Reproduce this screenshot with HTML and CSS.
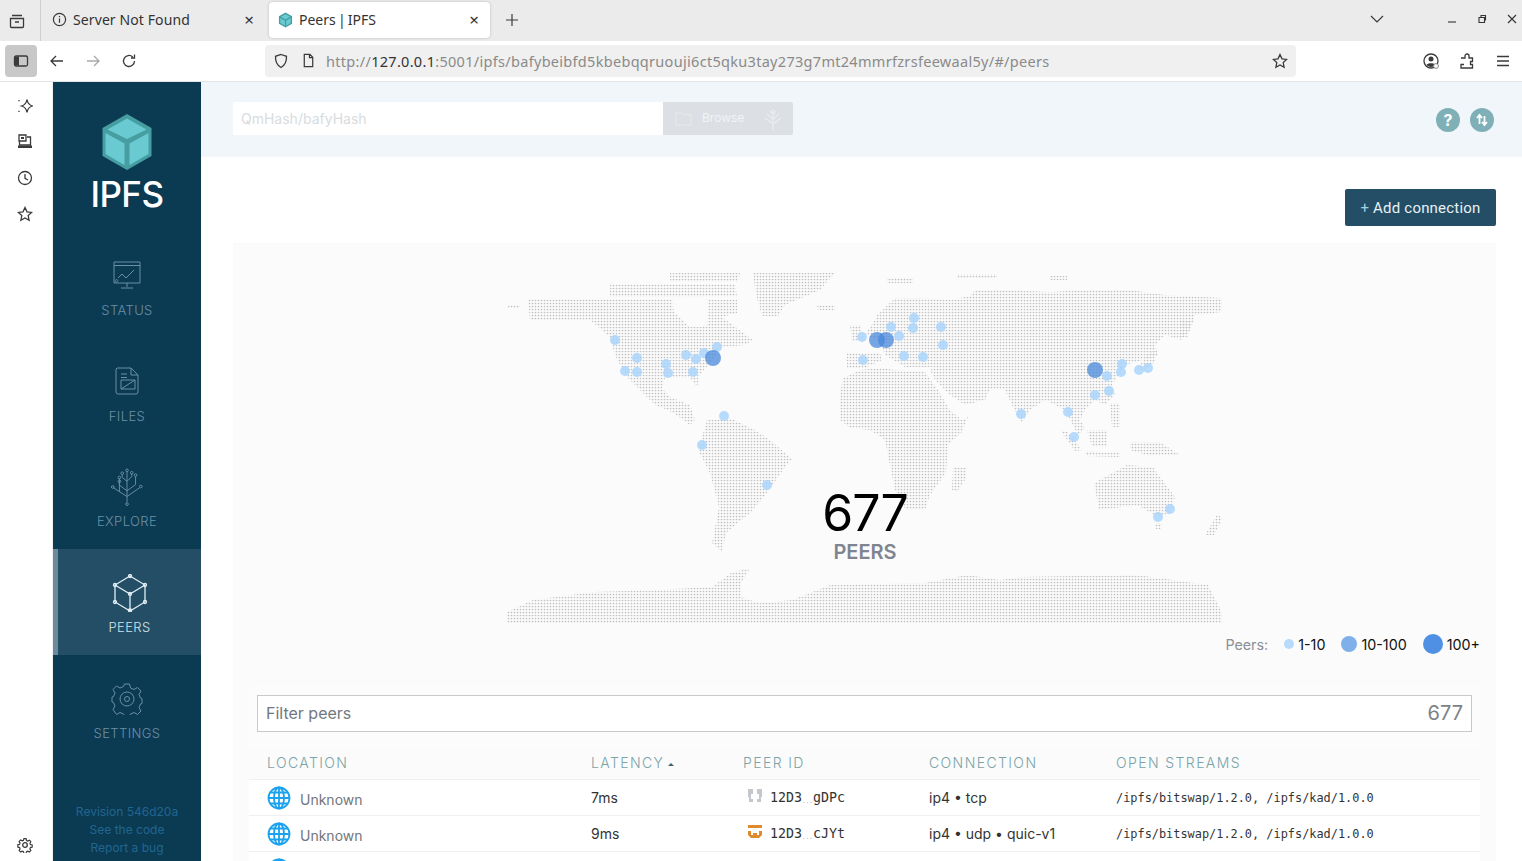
FILE: index.html
```html
<!DOCTYPE html>
<html lang="en">
<head>
<meta charset="utf-8">
<title>Peers | IPFS</title>
<link rel="stylesheet" href="styles.css">
</head>
<body>
<div class="tabbar">
  <div class="tabbar-lead">
    <svg class="ic16" viewBox="0 0 16 16"><path d="M3 2.500h10M1.500 5.500h13v8a1 1 0 0 1-1 1h-11a1 1 0 0 1-1-1zM6 9h4"/></svg>
  </div>
  <div class="tab">
    <svg class="ic15 tab-icon" viewBox="0 0 16 16"><circle cx="8" cy="8" r="6.500"/><path d="M8 7v4.500M8 4.200v1.400"/></svg>
    <span class="tab-title">Server Not Found</span>
    <span class="tab-close">×</span>
  </div>
  <div class="tab tab-active">
    <svg class="tab-cube" viewBox="0 0 16 16"><path fill="#469ea2" d="M8 0l7 4v8l-7 4-7-4V4z"/><path fill="#6acad1" d="M8 1.800l5 2.800-5 2.800-5-2.800zM2.400 5.800l5 2.900v5.400l-5-2.900zM13.600 5.800l-5 2.900v5.400l5-2.900z"/></svg>
    <span class="tab-title tab-title-tight">Peers | IPFS</span>
    <span class="tab-close">×</span>
  </div>
  <svg class="ic14 newtab" viewBox="0 0 14 14"><path d="M7 1v12M1 7h12"/></svg>
  <div class="grow"></div>
  <svg class="ic14 tab-list" viewBox="0 0 14 14"><path d="M1 4l6 6 6-6"/></svg>
  <div class="winctl">
    <svg class="ic10" viewBox="0 0 10 10"><path d="M1 8h8"/></svg>
    <svg class="ic10" viewBox="0 0 10 10"><path d="M2 3.500h5.500v5H2zM4 3.500V1.500h4.500v4.500H7.500"/></svg>
    <svg class="ic10" viewBox="0 0 10 10"><path d="M1 1l8 8M9 1l-8 8"/></svg>
  </div>
</div>

<div class="toolbar">
  <div class="sidebar-btn"><svg class="ic16" viewBox="0 0 16 16"><rect x="1.500" y="3" width="13" height="10" rx="1.500"/><path class="solid" d="M2 3.500h4v9H2z"/></svg></div>
  <svg class="ic16 tool" viewBox="0 0 16 16"><path d="M14 8H2M7 3L2 8l5 5"/></svg>
  <svg class="ic16 tool tool-off" viewBox="0 0 16 16"><path d="M2 8h12M9 3l5 5-5 5"/></svg>
  <svg class="ic16 tool" viewBox="0 0 16 16"><path d="M13.500 8a5.500 5.500 0 1 1-1.800-4.100M13.500 1.500v3.500H10"/></svg>
  <div class="urlbar">
    <svg class="ic16 url-shield" viewBox="0 0 16 16"><path d="M8 1.500l5.500 1.800c.2 5-1.500 9-5.500 11.200-4-2.200-5.700-6.200-5.500-11.200z"/></svg>
    <svg class="ic15 url-doc" viewBox="0 0 16 16"><path d="M3.500 1.500h6l3 3v10h-9zM9 1.500v3.500h3.500"/></svg>
    <span class="url"><span class="url-dim">http://</span>127.0.0.1<span class="url-dim">:5001/ipfs/bafybeibfd5kbebqqruouji6ct5qku3tay273g7mt24mmrfzrsfeewaal5y/#/peers</span></span>
    <svg class="ic16 url-star" viewBox="0 0 16 16"><path d="M8 1.500l2 4.300 4.700.6-3.500 3.200.9 4.700L8 12l-4.100 2.300.9-4.700L1.300 6.400 6 5.800z"/></svg>
  </div>
  <svg class="ic16 tool-r" viewBox="0 0 16 16"><circle cx="8" cy="8" r="7"/><circle class="solid" cx="8" cy="6" r="2.500"/><path class="solid" d="M3.500 12c1-2.500 8-2.500 9 0-2 2.500-7 2.500-9 0z"/><circle class="badge" cx="13" cy="13" r="2.400"/></svg>
  <svg class="ic16 tool-r" viewBox="0 0 16 16"><path d="M2 5h4V3a2 2 0 0 1 4 0v2h3.500v3.500h-2v3h2V15H2v-3.500h3"/></svg>
  <svg class="ic16 tool-r" viewBox="0 0 16 16"><path d="M2 3.500h12M2 8h12M2 12.500h12"/></svg>
</div>

<div class="content">
  <aside class="fxbar">
    <svg class="ic16 fx" viewBox="0 0 16 16"><path d="M10 1.500c.6 4 2 5.500 5.500 6.500-3.500 1-4.900 2.500-5.500 6.500-.6-4-2-5.500-5.500-6.500 3.500-1 4.900-2.500 5.500-6.500z"/><path d="M2 2v1.200M2 12.800V14"/></svg>
    <svg class="ic16 fx" viewBox="0 0 16 16"><path d="M2 1h7v6H2zM10 3h3.500v8H2.500V7"/><path class="solid" d="M1 11.500h14v2.500H1zM4 3h3v2H4z"/></svg>
    <svg class="ic16 fx" viewBox="0 0 16 16"><circle cx="8" cy="8" r="6.500"/><path d="M8 4v4.300l3 1.700"/></svg>
    <svg class="ic16 fx" viewBox="0 0 16 16"><path d="M8 1.500l2 4.300 4.700.6-3.500 3.200.9 4.700L8 12l-4.100 2.300.9-4.700L1.300 6.400 6 5.800z"/></svg>
    <div class="grow"></div>
    <svg class="ic16 fx fx-last" viewBox="0 0 16 16"><circle cx="8" cy="8" r="2.300"/><path d="M6.800 1h2.400l.5 2 1.400.6 1.800-1 1.600 1.700-1 1.800.5 1.400 2 .5v2.400l-2 .5-.5 1.400 1 1.800-1.600 1.700-1.800-1-1.400.6-.5 2H6.800l-.5-2-1.400-.6-1.800 1-1.600-1.700 1-1.800-.5-1.400-2-.5V7.800l2-.5.5-1.400-1-1.800 1.600-1.700 1.800 1 1.400-.6z" transform="translate(.8 .8) scale(.9)"/></svg>
  </aside>

  <nav class="nav">
    <div class="brand">
      <svg class="brand-cube" viewBox="0 0 50 56"><path fill="#469ea2" d="M25 0l24.500 14v28L25 56 .5 42V14z"/><path fill="#6acad1" d="M25 4.500l19.500 11L25 25 5.500 15.500zM3.500 19l19 10.500V51L3.500 40zM46.500 19l-19 10.500V51l19-11z"/></svg>
      <div class="brand-name">IPFS</div>
    </div>
    <a class="nav-item">
      <svg class="nav-icon" viewBox="0 0 32 32"><path d="M3 3h26v21H3zM3 6.500h26M16 24v4M10 29h12M5.500 20.500a1.200 1.200 0 1 0 .1 0M7 19l4-4 4 4 6-6 2-2"/></svg>
      <span class="nav-label">STATUS</span>
    </a>
    <a class="nav-item">
      <svg class="nav-icon" viewBox="0 0 32 32"><path d="M6 3h14l7 7v17a2 2 0 0 1-2 2H7a2 2 0 0 1-2-2V4zM20 3v7h7M10 9h6M10 12.500h6M10 15h14v9H10zM10 24l14-9"/></svg>
      <span class="nav-label">FILES</span>
    </a>
    <a class="nav-item">
      <svg class="nav-icon nav-icon-tall" viewBox="0 0 36 40"><path d="M18 36V4M18 30L4 21M18 30l13-9M18 24l-8-6V11M18 24l9-6.500V9M18 14l-5-4V7M18 14l5-5V6M10 25V15"/><circle cx="18" cy="2.500" r="1.400"/><circle cx="18" cy="38" r="1.400"/><circle cx="3" cy="20" r="1.400"/><circle cx="32.500" cy="19.500" r="1.400"/><circle cx="10" cy="10" r="1.400"/><circle cx="27" cy="7.500" r="1.400"/><circle cx="13" cy="5.500" r="1.400"/><circle cx="23" cy="5" r="1.400"/><circle cx="10" cy="14" r="1.400"/></svg>
      <span class="nav-label nav-label-low">EXPLORE</span>
    </a>
    <a class="nav-item nav-active">
      <svg class="nav-icon nav-icon-tall" viewBox="0 0 36 38"><path d="M18 2l15 9v17l-15 9-15-9V11zM3 11l15 9 15-9M18 20v17"/><circle cx="18" cy="2" r="1.500"/><circle cx="33" cy="11" r="1.500"/><circle cx="33" cy="28" r="1.500"/><circle cx="18" cy="36.500" r="1.500"/><circle cx="3" cy="28" r="1.500"/><circle cx="3" cy="11" r="1.500"/><circle cx="18" cy="20" r="1.500"/></svg>
      <span class="nav-label nav-label-low">PEERS</span>
    </a>
    <a class="nav-item">
      <svg class="nav-icon" viewBox="0 0 32 32"><circle cx="16" cy="16" r="2.500"/><circle cx="16" cy="16" r="7"/><path d="M13.500 1l5 0 1 4 3.500 1.500 3.500-2 3.500 3.500-2 3.500 1.500 3.500 1.500.5v5l-1.500.5-1.500 3.500 2 3.500-3.500 3.500-3.500-2-3.500 1.500-1 2h-5l-1-2-3.500-1.500-3.500 2L2 26.500l2-3.500-1.500-3.500L1 19v-5l1.500-.5L4 10 2 6.500 5.500 3l3.500 2 3.500-1.500z"/></svg>
      <span class="nav-label nav-label-set">SETTINGS</span>
    </a>
    <div class="grow"></div>
    <div class="nav-foot">
      <div>Revision 546d20a</div>
      <div>See the code</div>
      <div>Report a bug</div>
    </div>
  </nav>

  <main class="main">
    <header class="topbar">
      <div class="search">
        <div class="search-input">QmHash/bafyHash</div>
        <div class="browse">
          <svg class="browse-ic" viewBox="0 0 18 16"><path d="M1 2h6l1.500 2H17v11H1z"/></svg>
          <span class="browse-text">Browse</span>
          <svg class="browse-tree" viewBox="0 0 18 22"><path d="M9 22V1M9 16L1 10M9 16l8-6M9 11L3 6M9 11l6-5M9 6L6 3M9 6l3-3"/></svg>
        </div>
      </div>
      <div class="grow"></div>
      <div class="round">?</div>
      <div class="round round-arrows"><svg viewBox="0 0 16 16"><path d="M5.500 12V3.500M3 6l2.500-3L8 6M10.500 4v8.500M8 10l2.500 3 2.500-3"/></svg></div>
    </header>

    <div class="page">
      <div class="actions"><button class="add"><span class="add-plus">+</span> Add connection</button></div>
      <section class="panel">
        <div class="map-wrap">
          <svg class="map" viewBox="507 272 716 352" width="716" height="352">
            <defs>
              <pattern id="dots" x="507" y="272" width="3" height="3" patternUnits="userSpaceOnUse">
                <circle cx="1.500" cy="1.500" r="0.850" fill="#c0c0c0"/>
              </pattern>
            </defs>
            <g fill="url(#dots)">
              <path d="M528 299L672 299 674 312 690 327 707 327 708 300 737 300 737 313 722 317 753 340 745 345 722 347 712 360 700 375 697 387 690 378 665 378 662 388 670 397 690 405 695 420 690 425 672 412 655 405 640 390 625 375 615 355 610 337 590 320 560 320 530 320z"/>
              <path d="M610 284L735 284 737 297 610 297zM670 273L740 273 738 282 670 282zM753 273L835 273 820 290 785 305 778 316 762 316 756 295zM508 305L520 305 520 308 508 308zM817 305L835 305 835 310 818 310z"/>
              <path d="M707 420L730 418 755 430 770 440 792 459 788 463 764 497 750 513 726 533 722 552 712 543 719 507 710 473 698 450z"/>
              <path d="M840 395L843 378 860 370 880 368 895 370 925 372 938 390 950 410 962 420 968 417 962 432 948 445 946 473 930 495 925 510 906 510 895 490 889 460 885 440 870 430 850 428 840 420z"/>
              <path d="M953 467L967 467 965 480 957 492 952 490z"/>
              <path d="M877 315L895 298 925 298 950 300 970 296 975 290 1005 290 1050 292 1085 290 1130 290 1165 295 1222 298 1222 312 1195 315 1192 325 1182 340 1165 335 1155 345 1158 355 1150 358 1125 365 1112 385 1115 395 1105 405 1095 400 1085 410 1080 420 1085 428 1078 435 1065 410 1045 400 1030 410 1022 423 1012 405 1005 390 990 390 985 400 965 405 950 395 935 380 930 370 935 367 905 367 885 355 880 340 865 335 876 318z"/>
              <path d="M847 353L880 353 882 360 865 368 847 368zM850 325L860 325 865 340 852 342zM887 278L913 278 913 283 887 283zM957 274L997 274 997 278 957 278zM1050 276L1067 276 1067 280 1050 280zM1180 320L1193 320 1188 337 1180 337z"/>
              <path d="M1087 430L1107 430 1107 447 1092 447zM1060 430L1068 432 1082 450 1075 451zM1085 451L1120 453 1120 457 1085 456zM1110 403L1120 403 1120 427 1112 427zM1130 442L1160 442 1180 455 1150 456 1130 450zM1137 368L1150 352 1157 350 1155 362 1142 372z"/>
              <path d="M1094 483L1127 465 1153 467 1175 497 1170 513 1158 517 1137 505 1099 510zM1155 523L1162 523 1161 529 1156 529zM1205 535L1218 513 1222 520 1214 535z"/>
              <path d="M507 612L533 600 594 592 656 590 712 587 731 573 750 568 741 583 741 597 759 603 792 600 830 585 925 583 967 575 1000 580 1019 577 1137 575 1208 585 1222 612 1222 623 507 623z"/>
            </g>
            <g class="marks-s">
              <circle cx="615" cy="340" r="5"/><circle cx="637" cy="358" r="5"/><circle cx="625" cy="371" r="5"/><circle cx="637" cy="372" r="5"/><circle cx="666" cy="364" r="5"/><circle cx="668" cy="373" r="5"/><circle cx="686" cy="355" r="5"/><circle cx="696" cy="359" r="5"/><circle cx="704" cy="353" r="5"/><circle cx="717" cy="347" r="5"/><circle cx="693" cy="372" r="5"/><circle cx="724" cy="416" r="5"/><circle cx="702" cy="445" r="5"/><circle cx="767" cy="485" r="5"/><circle cx="862" cy="337" r="5"/><circle cx="863" cy="360" r="5"/><circle cx="891" cy="327" r="5"/><circle cx="899" cy="336" r="5"/><circle cx="914" cy="318" r="5"/><circle cx="913" cy="328" r="5"/><circle cx="941" cy="327" r="5"/><circle cx="943" cy="345" r="5"/><circle cx="904" cy="356" r="5"/><circle cx="923" cy="357" r="5"/><circle cx="1021" cy="414" r="5"/><circle cx="1068" cy="412" r="5"/><circle cx="1074" cy="437" r="5"/><circle cx="1095" cy="395" r="5"/><circle cx="1109" cy="391" r="5"/><circle cx="1107" cy="376" r="5"/><circle cx="1121" cy="372" r="5"/><circle cx="1122" cy="364" r="5"/><circle cx="1139" cy="370" r="5"/><circle cx="1148" cy="368" r="5"/><circle cx="1158" cy="517" r="5"/><circle cx="1170" cy="509" r="5"/>
            </g>
            <g class="marks-l">
              <circle cx="713" cy="358" r="8"/><circle cx="877" cy="340" r="8"/><circle cx="886" cy="340" r="8"/><circle cx="1095" cy="370" r="8"/>
            </g>
          </svg>
          <div class="count">
            <div class="count-num">677</div>
            <div class="count-label">PEERS</div>
          </div>
        </div>
        <div class="legend">
          <span class="legend-title">Peers:</span>
          <span class="legend-item"><i class="dot dot-s"></i>1-10</span>
          <span class="legend-item"><i class="dot dot-m"></i>10-100</span>
          <span class="legend-item"><i class="dot dot-l"></i>100+</span>
        </div>
        <div class="table-card">
          <div class="filter">
            <div class="filter-box"><span>Filter peers</span><span class="filter-count">677</span></div>
          </div>
          <div class="row head">
            <div class="col-loc">LOCATION</div>
            <div class="col-lat">LATENCY <i class="sort"></i></div>
            <div class="col-id">PEER ID</div>
            <div class="col-con">CONNECTION</div>
            <div class="col-str">OPEN STREAMS</div>
          </div>
          <div class="row">
            <div class="col-loc loc"><svg class="globe" viewBox="0 0 24 24"><circle cx="12" cy="12" r="10.500"/><ellipse cx="12" cy="12" rx="5" ry="10.500"/><path d="M12 1.500v21M1.500 12h21M3 6.500h18M3 17.500h18"/></svg><span class="unknown">Unknown</span></div>
            <div class="col-lat">7ms</div>
            <div class="col-id"><svg class="ident" viewBox="0 0 14 14"><path fill="#c4c8cc" d="M0 0h5v5H3v5h2v3H1V8H0zM9 0h5v8h-1v5H9v-3h2V5H9z"/></svg><span>12D3</span><span class="ell">...</span><span>gDPc</span></div>
            <div class="col-con">ip4 • tcp</div>
            <div class="col-str">/ipfs/bitswap/1.2.0, /ipfs/kad/1.0.0</div>
          </div>
          <div class="row">
            <div class="col-loc loc"><svg class="globe" viewBox="0 0 24 24"><circle cx="12" cy="12" r="10.500"/><ellipse cx="12" cy="12" rx="5" ry="10.500"/><path d="M12 1.500v21M1.500 12h21M3 6.500h18M3 17.500h18"/></svg><span class="unknown">Unknown</span></div>
            <div class="col-lat">9ms</div>
            <div class="col-id"><svg class="ident" viewBox="0 0 14 14"><path fill="#e08a2e" d="M0 0h14v3H0zM0 6h3v4h2V8h4v2h2V6h3v4l-3 3H3l-3-3z"/></svg><span>12D3</span><span class="ell">...</span><span>cJYt</span></div>
            <div class="col-con">ip4 • udp • quic-v1</div>
            <div class="col-str">/ipfs/bitswap/1.2.0, /ipfs/kad/1.0.0</div>
          </div>
          <div class="row">
            <div class="col-loc loc"><svg class="globe" viewBox="0 0 24 24"><circle cx="12" cy="12" r="10.500"/><ellipse cx="12" cy="12" rx="5" ry="10.500"/><path d="M12 1.500v21M1.500 12h21M3 6.500h18M3 17.500h18"/></svg></div>
          </div>
        </div>
      </section>
    </div>
  </main>
</div>
</body>
</html>
```

FILE: styles.css
```css
* { box-sizing: border-box; }
html, body { margin: 0; height: 861px; overflow: hidden; background: #fff; }
body { font-family: Inter, "Noto Sans", sans-serif; color: #333; }
svg { fill: none; flex: none; display: block; }
.grow { flex: 1; }

.ic16 { width: 16px; height: 16px; stroke: #3a3a3a; stroke-width: 1.300; }
.ic15 { width: 15px; height: 15px; stroke: #3a3a3a; stroke-width: 1.300; }
.ic14 { width: 14px; height: 14px; stroke: #3a3a3a; stroke-width: 1.200; }
.ic10 { width: 10px; height: 10px; stroke: #333; stroke-width: 1.100; }
.solid { fill: #3a3a3a; stroke: none; }
.badge { fill: #fff; stroke: #888; stroke-width: 1; }

.tabbar { height: 41px; background: #ebebeb; display: flex; align-items: center; font-family: "Noto Sans", sans-serif; }
.tabbar-lead { width: 41px; height: 41px; border-right: 1px solid #cfcfcf; display: flex; align-items: center; padding-left: 9px; }
.tab { width: 222px; height: 36px; margin-top: -2px; display: flex; align-items: center; padding: 0 7px 0 11px; font-size: 14px; color: #333; border-radius: 4px; }
.tab-active { margin-left: 6px; width: 221px; background: #fff; box-shadow: 0 0 3px rgba(0,0,0,.2); padding: 0 9px; }
.tab-icon { margin-right: 6px; }
.tab-cube { width: 15px; height: 16px; margin-right: 6px; }
.tab-title { flex: 1; letter-spacing: .1px; }
.tab-title-tight { word-spacing: -1.500px; letter-spacing: 0; }
.tab-close { font-size: 17px; line-height: 1; width: 14px; text-align: center; color: #333; }
.newtab { margin-left: 15px; margin-top: -2px; }
.tab-list { margin-right: 63px; margin-top: -3px; }
.winctl { display: flex; align-items: center; gap: 20px; padding-right: 5px; margin-top: -3px; }

.toolbar { height: 41px; border-bottom: 1px solid #e4e4e4; display: flex; align-items: center; padding: 0 11px 1px 5px; }
.sidebar-btn { width: 32px; height: 32px; background: #c8c8c8; border-radius: 4px; display: flex; align-items: center; justify-content: center; margin-right: 12px; }
.tool { margin-right: 20px; }
.tool-off { stroke: #a9a9a9; }
.urlbar { width: 1031px; height: 32px; margin-left: 108px; margin-right: 127px; background: #f0f0f0; border-radius: 4px; display: flex; align-items: center; padding: 0 8px; font-family: "Noto Sans", sans-serif; flex: none; }
.url-shield { margin-right: 12px; }
.url-doc { margin-right: 10px; }
.url { flex: 1; font-size: 14.500px; letter-spacing: .3px; color: #333; white-space: nowrap; }
.url-dim { color: #8a8a8a; }
.tool-r { margin-right: 20px; }
.tool-r:last-child { margin-right: 0; }

.content { display: flex; height: 779px; }
.fxbar { width: 53px; display: flex; flex-direction: column; align-items: center; padding: 16px 3px 8px 0; border-right: 1px solid #f0f0f0; }
.fx { margin-bottom: 20px; }
.fx-last { margin-bottom: 0; }

.nav { width: 148px; background: #0b3a53; display: flex; flex-direction: column; flex: none; }
.brand { height: 149px; padding-top: 32px; display: flex; flex-direction: column; align-items: center; }
.brand-cube { width: 50px; height: 56px; }
.brand-name { color: #fff; font-size: 35px; font-weight: 500; line-height: 36px; margin-top: 6px; letter-spacing: -.5px; font-family: "Inter", sans-serif; }
.nav-item { height: 106px; display: flex; flex-direction: column; align-items: center; padding-top: 28px; color: #6b8fa5; }
.nav-icon { width: 32px; height: 32px; stroke: #6b8fa5; stroke-width: 1; }
.nav-icon-tall { width: 36px; height: 38px; margin-top: -3px; }
.nav-label { font-family: Inter, sans-serif; font-weight: 300; font-size: 13px; letter-spacing: .4px; margin-top: 11px; line-height: 16px; }
.nav-label-low { margin-top: 7px; }
.nav-label-set { margin-top: 10px; }
.nav-active { background: #244e66; border-left: 5px solid #6b8a9d; color: #d4e3ec; }
.nav-active .nav-icon { stroke: #e3eef5; stroke-width: 1.300; }
.nav-foot { text-align: center; color: #21668f; font-size: 12px; line-height: 18px; padding-bottom: 4px; }

.main { flex: 1; min-width: 0; display: flex; flex-direction: column; }
.topbar { height: 75px; background: #f0f6fa; display: flex; align-items: center; padding: 0 28px 0 32px; flex: none; }
.search { display: flex; height: 33px; margin-top: -2px; }
.search-input { width: 430px; background: #fff; color: #d8dce0; font-size: 14px; padding: 8px 8px 0; }
.browse { width: 130px; background: #dcdfe3; border-radius: 0 2px 2px 0; display: flex; align-items: center; padding: 0 11px 0 12px; color: #f3f4f6; font-size: 12px; }
.browse-ic { width: 17px; height: 15px; stroke: #e9ebee; stroke-width: 1; }
.browse-text { flex: 1; margin-left: 10px; margin-top: -3px; }
.browse-tree { width: 18px; height: 22px; stroke: #e9ebee; stroke-width: 1.500; }
.round { width: 24px; height: 24px; border-radius: 50%; background: #7fb0b7; color: #fff; font-size: 16px; font-weight: 700; display: flex; align-items: center; justify-content: center; margin-top: 1px; margin-left: 1px; }
.round-arrows { margin-left: 10px; margin-top: 1px; }
.round-arrows svg { width: 16px; height: 16px; stroke: #fff; stroke-width: 1.800; }

.page { flex: 1; padding: 32px 26px 0 32px; overflow: hidden; }
.actions { display: flex; justify-content: flex-end; margin-bottom: 17px; }
.add { width: 151px; height: 37px; background: #244e66; border: 0; border-radius: 2px; color: #e8f1f6; font-family: Roboto, sans-serif; font-size: 15px; letter-spacing: .2px; padding: 0; }
.add-plus { color: #9fd0e4; }
.panel { background: #fbfbfb; padding: 29px 16px 0; height: 700px; }
.map-wrap { position: relative; height: 352px; display: flex; justify-content: center; margin-left: 1px; }
.marks-s { fill: #a9d5fd; fill-opacity: .85; }
.marks-l { fill: #4a88dc; fill-opacity: .75; }
.count { position: absolute; left: 50%; top: 212px; transform: translateX(-50%); text-align: center; }
.count-num { font-size: 50px; line-height: 58px; color: #000; font-weight: 400; letter-spacing: -1px; }
.count-label { font-size: 20px; line-height: 22px; color: #7f8491; font-weight: 600; margin-top: -1px; }
.legend { display: flex; justify-content: flex-end; align-items: center; height: 20px; margin-top: 10px; font-size: 14.300px; color: #111; }
.legend-title { color: #8a8f98; margin-right: 16px; }
.legend-item { display: flex; align-items: center; margin-right: 16px; }
.legend-item:last-child { margin-right: 0; }
.dot { display: block; border-radius: 50%; margin-right: 4px; }
.dot-s { width: 10px; height: 10px; background: #b7dcfb; }
.dot-m { width: 16px; height: 16px; background: #7fb0ea; }
.dot-l { width: 20px; height: 20px; background: #4f90e4; }

.table-card { background: #fff; margin-top: 32px; }
.filter { padding: 9px 8px 16px; background: #fcfcfc; }
.filter-box { height: 37px; border: 1px solid #c9c9c9; background: #fff; display: flex; justify-content: space-between; align-items: center; padding: 0 8px 2px; font-size: 16px; color: #737780; }
.filter-count { font-size: 20px; color: #7e8289; }

.row { display: flex; align-items: center; height: 36px; border-bottom: 1px solid #f0f0f0; font-size: 14px; color: #333; white-space: nowrap; }
.head { height: 32px; background: #fbfbfb; color: #7aa3a8; font-size: 14px; font-weight: 300; letter-spacing: 1.400px; padding-bottom: 2px; }
.col-loc { width: 342px; padding-left: 18px; }
.col-lat { width: 152px; }
.col-id { width: 186px; display: flex; align-items: center; }
.col-con { width: 187px; }
.col-str { font-family: "DejaVu Sans Mono", monospace; font-size: 11.900px; }
.head .col-id { display: block; }
.head .col-str { font-family: Inter, sans-serif; font-size: 14px; }
.sort { display: inline-block; width: 0; height: 0; border: 3px solid transparent; border-top: 0; border-bottom: 3px solid #41636e; vertical-align: 2px; margin-left: -2px; }
.loc { display: flex; align-items: center; }
.globe { width: 24px; height: 24px; stroke: #1aa2ee; stroke-width: 1.800; margin-right: 9px; }
.unknown { color: #72767e; margin-top: 3px; }
.ident { width: 14px; height: 14px; margin: -4px 8px 0 5px; }
.col-id span { font-family: "DejaVu Sans Mono", monospace; font-size: 13.300px; }
.col-id .ell { color: #999; font-size: 6px; letter-spacing: 0; margin-top: 5px; width: 11px; text-align: center; }
```
